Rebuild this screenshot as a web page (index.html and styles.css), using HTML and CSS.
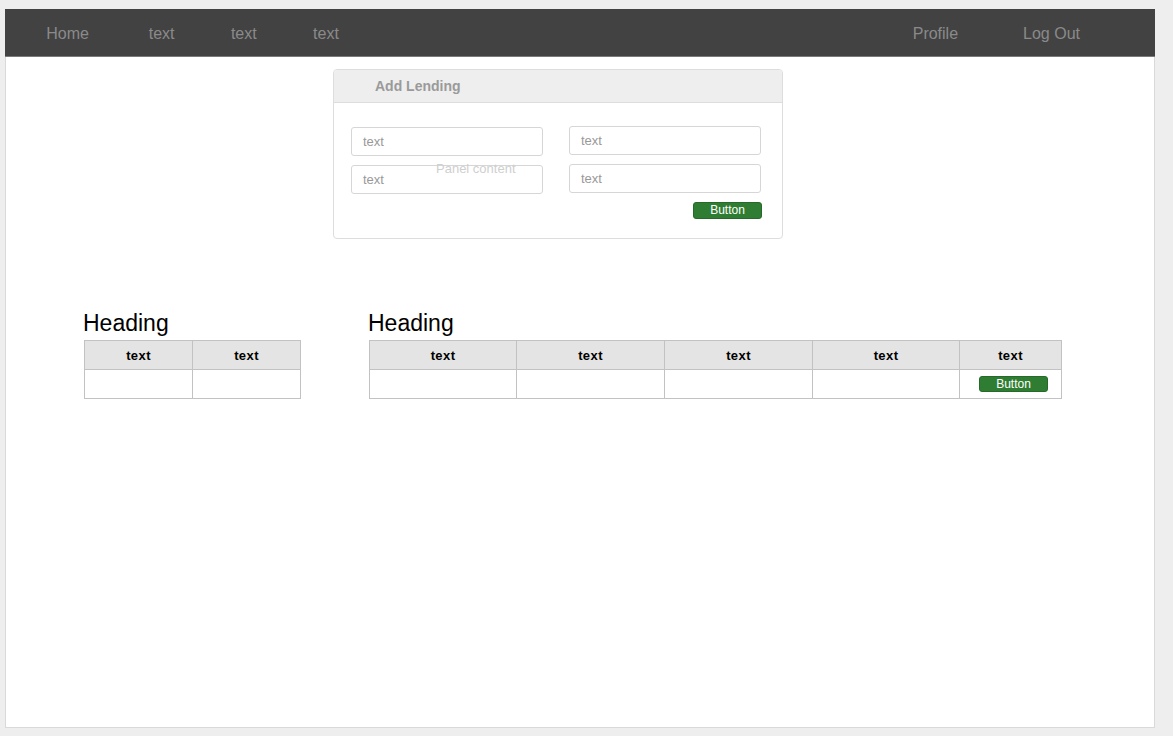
FILE: index.html
```html
<!DOCTYPE html>
<html>
<head>
<meta charset="utf-8">
<link rel="stylesheet" href="styles.css">
</head>
<body>
<div class="page">
  <nav class="nav">
    <div class="nav-left">
      <a class="nav-item home">Home</a>
      <a class="nav-item">text</a>
      <a class="nav-item">text</a>
      <a class="nav-item">text</a>
    </div>
    <div class="nav-right">
      <a class="nav-item right profile">Profile</a>
      <a class="nav-item right">Log Out</a>
    </div>
  </nav>

  <section class="panel">
    <div class="panel-head">Add Lending</div>
    <div class="panel-body">
      <span class="panel-ghost">Panel content</span>
      <div class="form-grid">
        <div class="col">
          <input class="field" placeholder="text">
          <input class="field" placeholder="text">
        </div>
        <div class="col col-right">
          <input class="field" placeholder="text">
          <input class="field" placeholder="text">
        </div>
      </div>
      <div class="actions"><button class="btn">Button</button></div>
    </div>
  </section>

  <section class="tables">
    <div class="block">
      <h2 class="heading">Heading</h2>
      <table class="grid grid-small">
        <colgroup><col class="c108"><col class="c108"></colgroup>
        <thead><tr><th>text</th><th>text</th></tr></thead>
        <tbody><tr><td></td><td></td></tr></tbody>
      </table>
    </div>
    <div class="block">
      <h2 class="heading">Heading</h2>
      <table class="grid grid-large">
        <colgroup><col class="c147"><col class="c148"><col class="c148"><col class="c147"><col class="c102"></colgroup>
        <thead><tr><th>text</th><th>text</th><th>text</th><th>text</th><th>text</th></tr></thead>
        <tbody><tr><td></td><td></td><td></td><td></td><td class="btn-cell"><button class="btn btn-sm">Button</button></td></tr></tbody>
      </table>
    </div>
  </section>
</div>
</body>
</html>
```

FILE: styles.css
```css
html, body {
  margin: 0;
  padding: 0;
}
body {
  background: #eeeeee;
  font-family: "Liberation Sans", Arial, sans-serif;
  padding: 9px 0 0 5px;
}
.page {
  width: 1150px;
  height: 719px;
  box-sizing: border-box;
  background: #ffffff;
  border: 1px solid #d9d9d9;
  border-top: none;
  display: flex;
  flex-direction: column;
}
.nav {
  height: 47px;
  margin: 0 -1px;
  background: #424242;
  border-bottom: 1px solid #7a7a7a;
  display: flex;
  justify-content: space-between;
  align-items: center;
}
.nav-left {
  display: flex;
  padding-left: 13px;
}
.nav-right {
  display: flex;
  padding-right: 43px;
}
.nav-item {
  color: #8a8a8a;
  font-size: 16px;
  line-height: 47px;
  padding: 1px 28.2px 0;
  text-decoration: none;
}
.nav-item.home {
  margin-right: 3.5px;
}
.nav-item.right {
  padding: 1px 32px 0;
}
.nav-item.profile {
  margin-right: 1px;
}

.panel {
  width: 450px;
  box-sizing: border-box;
  margin: 12px 0 0 327px;
  border: 1px solid #dddddd;
  border-radius: 4px;
  overflow: hidden;
}
.panel-head {
  height: 32px;
  line-height: 32px;
  background: #eeeeee;
  border-bottom: 1px solid #dddddd;
  padding-left: 41px;
  font-size: 14px;
  font-weight: bold;
  color: #9a9a9a;
}
.panel-body {
  position: relative;
  padding: 24px 21px 19px 17px;
}
.panel-ghost {
  position: absolute;
  left: 102px;
  top: 58px;
  font-size: 13px;
  color: #cfcfcf;
  z-index: 2;
  pointer-events: none;
}
.form-grid {
  display: flex;
  gap: 26px;
}
.col {
  display: flex;
  flex-direction: column;
  gap: 9px;
  width: 192px;
}
.col-right {
  margin-top: -1px;
}
.field {
  width: 192px;
  height: 29px;
  box-sizing: border-box;
  border: 1px solid #d6d6d6;
  border-radius: 3px;
  padding: 0 11px;
  font-family: "Liberation Sans", Arial, sans-serif;
  font-size: 13px;
  color: #999999;
  background: #ffffff;
  margin: 0;
}
.field::placeholder {
  color: #999999;
}
.actions {
  display: flex;
  justify-content: flex-end;
  margin-top: 8px;
  margin-right: -1px;
}
.btn {
  width: 69px;
  height: 17px;
  padding: 0;
  box-sizing: border-box;
  background: #2e7d32;
  border: 1px solid #27692a;
  border-radius: 3px;
  color: #ffffff;
  font-family: "Liberation Sans", Arial, sans-serif;
  font-size: 12px;
  line-height: 15px;
}
.btn-sm {
  height: 16px;
  line-height: 14px;
  display: block;
  margin: 0 0 0 19px;
}

.tables {
  display: flex;
  gap: 67px;
  margin-top: 73px;
  padding-left: 77px;
}
.block {
  display: flex;
  flex-direction: column;
}
.heading {
  margin: 0 0 5px 0;
  font-size: 23px;
  line-height: 23px;
  font-weight: normal;
  color: #000000;
}
.grid {
  margin-left: 1px;
  border-collapse: collapse;
  table-layout: fixed;
}
.grid-small { width: 217px; }
.grid-large { width: 693px; }
.c108 { width: 108px; }
.c147 { width: 147px; }
.c148 { width: 148px; }
.c102 { width: 102px; }
.grid th, .grid td {
  border: 1px solid #c2c2c2;
  height: 29px;
  padding: 0;
  box-sizing: border-box;
}
.grid th {
  background: #e4e4e4;
  font-size: 13px;
  letter-spacing: 0.4px;
  font-weight: bold;
  color: #000000;
  text-align: center;
  padding-top: 1px;
}
.btn-cell {
  vertical-align: middle;
}
```
